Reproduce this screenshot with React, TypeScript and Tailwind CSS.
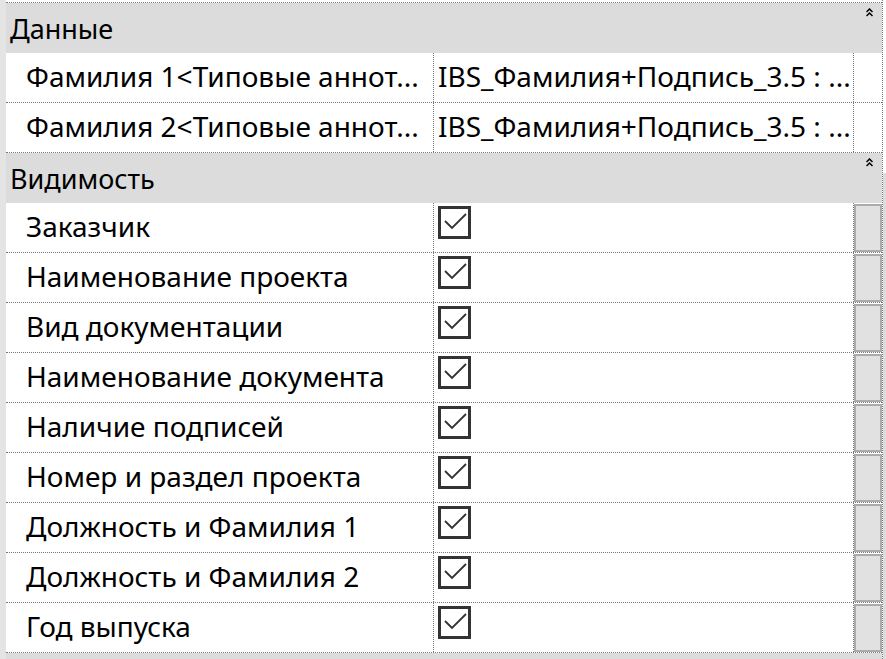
import React from "react";

type Row = { label: string; value?: string; checked?: boolean };

const data: Row[] = [
  { label: "Фамилия 1<Типовые аннот...", value: "IBS_Фамилия+Подпись_3.5 : ..." },
  { label: "Фамилия 2<Типовые аннот...", value: "IBS_Фамилия+Подпись_3.5 : ..." },
];

const visibility: Row[] = [
  "Заказчик",
  "Наименование проекта",
  "Вид документации",
  "Наименование документа",
  "Наличие подписей",
  "Номер и раздел проекта",
  "Должность и Фамилия 1",
  "Должность и Фамилия 2",
  "Год выпуска",
].map((label) => ({ label, checked: true }));

const CollapseIcon = () => (
  <svg width="7" height="9" viewBox="0 0 7 9" className="text-black">
    <path d="M0.5 4 L3.5 1 L6.5 4 M0.5 8 L3.5 5 L6.5 8" fill="none" stroke="currentColor" strokeWidth="1.5" />
  </svg>
);

const CheckBox = () => (
  <div className="w-[33px] h-[33px] border-[3px] border-[#333] bg-white flex items-center justify-center">
    <svg width="27" height="27" viewBox="0 0 27 27">
      <path d="M4 12 L11 19 L25 5" fill="none" stroke="#333" strokeWidth="1.8" />
    </svg>
  </div>
);

const Group = ({ title }: { title: string }) => (
  <div className="h-[50px] bg-[#dcdcdc] flex items-center justify-between pl-[4px] pr-[9px]">
    <span className="text-[27px] leading-none">{title}</span>
    <span className="self-start mt-[5px]">
      <CollapseIcon />
    </span>
  </div>
);

const PropRow = ({ row, button }: { row: Row; button?: boolean }) => (
  <div className="grid grid-cols-[427px_420px_1fr] h-[50px] border-b border-dotted border-[#777]">
    <div className="flex items-center pl-[20px] text-[28px] leading-none whitespace-nowrap overflow-hidden">
      <span className="-mt-[4px]">{row.label}</span>
    </div>
    <div className="flex items-center pl-[4px] text-[28px] leading-none whitespace-nowrap overflow-hidden border-l border-dotted border-[#777]">
      {row.checked ? (
        <div className="self-start mt-[3px]">
          <CheckBox />
        </div>
      ) : (
        <span className="-mt-[4px]">{row.value}</span>
      )}
    </div>
    <div className="border-l border-dotted border-[#777] pt-px">
      {button && <div className="h-full bg-[#e1e1e1] border-2 border-[#ababab]" />}
    </div>
  </div>
);

export default function App() {
  return (
    <div
      className="w-[886px] h-[659px] bg-white flex overflow-hidden text-black"
      style={{ fontFamily: '"Noto Sans", "Open Sans", sans-serif' }}
    >
      <div className="w-[6px] bg-[#e4e4e4]" />
      <div className="flex-1 flex flex-col pt-[2px]">
        <div className="border-t border-dotted border-[#777]" />
        <Group title="Данные" />
        {data.map((r) => (
          <PropRow key={r.label} row={r} />
        ))}
        <Group title="Видимость" />
        {visibility.map((r) => (
          <PropRow key={r.label} row={r} button />
        ))}
        <div className="flex-1 bg-[#dcdcdc]" />
      </div>
      <div className="w-[4px] flex flex-col border-l border-dotted border-[#777]">
        <div className="h-[173px]" />
        <div className="flex-1 bg-[#dcdcdc]" />
      </div>
    </div>
  );
}
